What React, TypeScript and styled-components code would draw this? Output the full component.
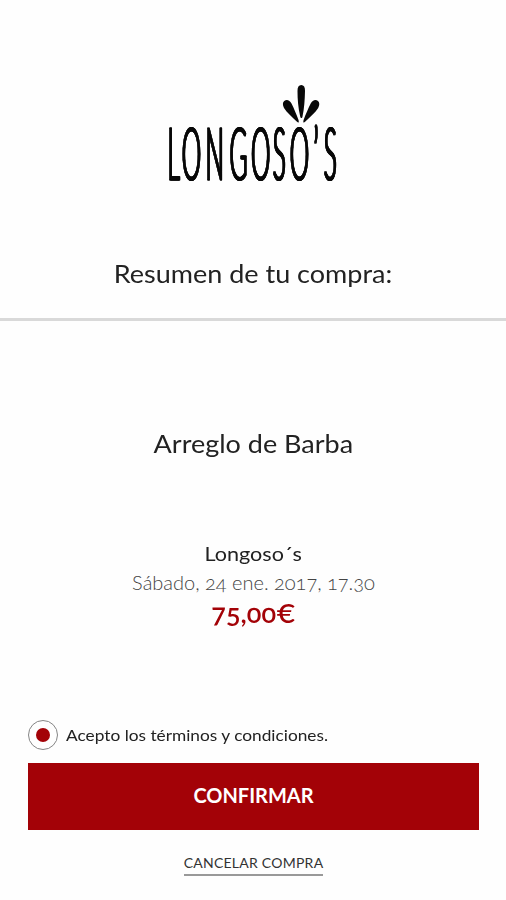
import React, { useState } from "react";
import styled, { createGlobalStyle } from "styled-components";

const RED = "#a30207";

const GlobalStyle = createGlobalStyle`
  * { box-sizing: border-box; }
  body { margin: 0; background: #fefefe; }
`;

const Screen = styled.main`
  display: flex;
  flex-direction: column;
  width: 506px;
  height: 900px;
  overflow: hidden;
  background: #fefefe;
  color: #222;
  font-family: Lato, "Open Sans", sans-serif;
`;

const Header = styled.header`
  display: flex;
  flex-direction: column;
  align-items: center;
  height: 321px;
  padding-top: 75px;
  border-bottom: 3px solid #d9d9d9;
`;

const Logo = styled.svg`
  display: block;
  width: 210px;
  height: 120px;
  margin-left: 4px;
  flex: none;
  overflow: visible;
`;

/* Thickens the vertical stems, which the narrow scaling makes thin. */
const Wordmark = styled.g`
  filter: drop-shadow(0.7px 0 0 #080808) drop-shadow(-0.7px 0 0 #080808);
`;

interface LineProps {
  $size: number;
  $height: number;
  $top?: number;
  $weight?: number;
  $color?: string;
  $stretch?: number;
  $origin?: string;
}

const Line = styled.p<LineProps>`
  display: block;
  margin: ${(p) => p.$top ?? 0}px 0 0;
  font-size: ${(p) => p.$size}px;
  line-height: ${(p) => p.$height}px;
  font-weight: ${(p) => p.$weight ?? 400};
  color: ${(p) => p.$color ?? "#222"};
  white-space: nowrap;
  font-feature-settings: "onum" 1;
  transform: scaleX(${(p) => p.$stretch ?? 1});
  transform-origin: ${(p) => p.$origin ?? "center"};
`;

const Currency = styled.span`
  font-feature-settings: "lnum" 1;
`;

const Summary = styled.section`
  display: flex;
  flex-direction: column;
  align-items: center;
  height: 399px;
  padding-top: 105px;
  padding-left: 1px;
`;

const Actions = styled.footer`
  display: flex;
  flex-direction: column;
  padding: 0 27px 0 28px;
`;

const Terms = styled.button`
  display: flex;
  align-items: center;
  gap: 8px;
  height: 30px;
  padding: 0;
  border: 0;
  background: none;
  font-family: inherit;
  text-align: left;
`;

const Ring = styled.span`
  display: grid;
  place-items: center;
  width: 30px;
  height: 30px;
  border: 1.5px solid #858585;
  border-radius: 50%;
`;

const Dot = styled.span<{ $on: boolean }>`
  width: 14px;
  height: 14px;
  border-radius: 50%;
  background: ${(p) => (p.$on ? RED : "transparent")};
`;

const Confirm = styled.button`
  height: 67px;
  margin-top: 13px;
  padding: 0 0 3px;
  border: 0;
  background: ${RED};
  color: #fff;
  font: 700 20px/30px Lato, sans-serif;
`;

const Cancel = styled.button`
  align-self: center;
  margin-top: 22px;
  padding: 0;
  border: 0;
  border-bottom: 2px solid #999;
  background: none;
  color: #333;
  font: 400 14px/22px Lato, sans-serif;
  letter-spacing: 0.25px;
`;

function LongososLogo() {
  return (
    <Logo viewBox="0 0 210 120" aria-label="Longoso's">
      <g fill="#080808">
        <path d="M151.300 10C153.800 10 155.200 12 155 16C154.800 25 154.200 34 152.500 41.500C152.100 43.500 150.700 43.500 150.200 41.500C148.200 33 147.500 24 147.500 16C147.400 12 148.800 10 151.300 10Z" />
        <path d="M134.200 26C136.500 24 139.700 25 141.500 28.500C144 33.500 146.300 39 148.500 45C149.200 47.500 148.500 48.300 147 46.800C142 42 136.900 37.500 134 33C132.500 30 132.500 27.500 134.200 26Z" />
        <path d="M168 26C165.700 24 162.500 25 160.700 28.500C158.200 33.500 155.800 39 153.600 45C152.900 47.500 153.600 48.300 155.100 46.800C160.100 42 165.300 37.500 168.200 33C169.700 30 169.700 27.500 168 26Z" />
      </g>
      <Wordmark>
        <text
          transform="translate(0 105.300) scale(.34 1)"
          x="71 123 192 262 327 382 441 490 532"
          textAnchor="middle"
          fontFamily="Lato, sans-serif"
          fontWeight="300"
          fontSize="72"
          fill="#080808"
          stroke="#080808"
          strokeWidth="1"
          strokeLinejoin="round"
        >
          LONGOSO’S
        </text>
      </Wordmark>
    </Logo>
  );
}

export default function App() {
  const [accepted, setAccepted] = useState(true);
  return (
    <>
      <GlobalStyle />
      <Screen>
        <Header>
          <LongososLogo />
          <Line as="h1" $size={25} $height={34} $top={61} $stretch={1.08}>Resumen de tu compra:</Line>
        </Header>
        <Summary>
          <Line as="h2" $size={25} $height={34} $stretch={1.08}>Arreglo de Barba</Line>
          <Line $size={20} $height={28} $top={79} $stretch={1.08}>Longoso´s</Line>
          <Line $size={20} $height={28} $top={1} $weight={300} $color="#444">Sábado, 24 ene. 2017, 17.30</Line>
          <Line $size={26} $height={34} $weight={600} $color={RED} $stretch={1.04}>75,00<Currency>€</Currency></Line>
        </Summary>
        <Actions>
          <Terms role="checkbox" aria-checked={accepted} onClick={() => setAccepted(!accepted)}>
            <Ring><Dot $on={accepted} /></Ring>
            <Line as="span" $size={16} $height={24} $stretch={1.08} $origin="left">Acepto los términos y condiciones.</Line>
          </Terms>
          <Confirm>CONFIRMAR</Confirm>
          <Cancel>CANCELAR COMPRA</Cancel>
        </Actions>
      </Screen>
    </>
  );
}
